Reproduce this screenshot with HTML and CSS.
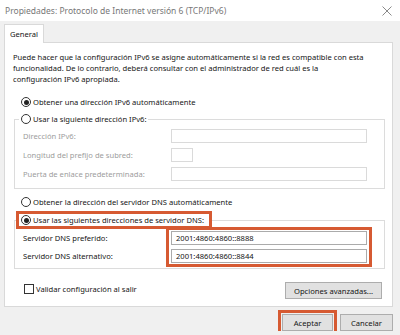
FILE: index.html
```html
<!DOCTYPE html>
<html>
<head>
  <meta charset="utf-8">
  <title>Propiedades: Protocolo de Internet versión 6 (TCP/IPv6)</title>
  <link rel="stylesheet" href="styles.css">
</head>
<body>
  <div class="titlebar">
    <span class="title">Propiedades: Protocolo de Internet versión 6 (TCP/IPv6)</span>
    <svg class="close" width="10" height="10" viewBox="0 0 10 10">
      <path d="M0.5 0.5 L9.5 9.5 M9.5 0.5 L0.5 9.5" stroke="#8a8a8a" stroke-width="1" fill="none"/>
    </svg>
  </div>
  <div class="content">
    <div class="tabs"><div class="tab">General</div></div>
    <div class="panel">
      <p class="intro">Puede hacer que la configuración IPv6 se asigne automáticamente si la red es compatible con esta<br>funcionalidad. De lo contrario, deberá consultar con el administrador de red cuál es la<br>configuración IPv6 apropiada.</p>

      <div class="option top-option"><span class="radio checked"></span>Obtener una dirección IPv6 automáticamente</div>

      <fieldset class="group ip-group">
        <legend><div class="option"><span class="radio"></span>Usar la siguiente dirección IPv6:</div></legend>
        <div class="fields">
          <span class="label disabled">Dirección IPv6:</span><span class="input off"></span>
          <span class="label disabled">Longitud del prefijo de subred:</span><span class="input off short"></span>
          <span class="label disabled">Puerta de enlace predeterminada:</span><span class="input off"></span>
        </div>
      </fieldset>

      <div class="option top-option dns-auto"><span class="radio"></span>Obtener la dirección del servidor DNS automáticamente</div>

      <fieldset class="group dns-group">
        <legend class="marked"><div class="option"><span class="radio checked"></span>Usar las siguientes direcciones de servidor DNS:</div></legend>
        <div class="dns-fields">
          <div class="dns-labels">
            <span class="label">Servidor DNS preferido:</span>
            <span class="label">Servidor DNS alternativo:</span>
          </div>
          <div class="dns-values">
            <span class="input">2001:4860:4860::8888</span>
            <span class="input">2001:4860:4860::8844</span>
          </div>
        </div>
      </fieldset>

      <div class="panel-footer">
        <div class="option check-option"><span class="checkbox"></span>Validar configuración al salir</div>
        <button class="btn advanced">Opciones avanzadas...</button>
      </div>
    </div>
    <div class="actions">
      <button class="btn accept">Aceptar</button>
      <button class="btn cancel">Cancelar</button>
    </div>
  </div>
</body>
</html>
```

FILE: styles.css
```css
* {
  box-sizing: border-box;
}
body {
  margin: 0;
  background: #f0f0f0;
  font-family: "Noto Sans", "Liberation Sans", sans-serif;
  font-size: 7.6px;
  color: #151515;
  overflow: hidden;
}
.titlebar {
  height: 21px;
  background: #fff;
  display: flex;
  align-items: center;
  justify-content: space-between;
  padding: 0 8px 0 5px;
}
.title {
  font-size: 8.5px;
  color: #777;
}
.content {
  padding: 3px 7px 0 4px;
}
.tabs {
  display: flex;
  margin-bottom: -1px;
}
.tab {
  height: 19px;
  line-height: 18px;
  padding: 0 5px;
  background: #fff;
  border: 1px solid #d9d9d9;
  border-bottom: none;
  position: relative;
  z-index: 1;
}
.panel {
  height: 265px;
  background: #fff;
  border: 1px solid #d9d9d9;
  padding: 9px 7px 0 8px;
}
.intro {
  margin: 0;
  line-height: 11px;
  white-space: nowrap;
}
.option {
  display: flex;
  align-items: center;
  gap: 2px;
  height: 12px;
  white-space: nowrap;
}
.top-option {
  margin: 11px 0 0 8px;
}
.dns-auto {
  margin-top: 7px;
}
.radio {
  width: 10px;
  height: 10px;
  border: 1px solid #333;
  border-radius: 50%;
  display: flex;
  align-items: center;
  justify-content: center;
  flex: none;
}
.radio.checked::after {
  content: "";
  width: 5px;
  height: 5px;
  border-radius: 50%;
  background: #222;
}
.checkbox {
  width: 10px;
  height: 10px;
  border: 1px solid #333;
  flex: none;
}
.group {
  margin: 5px 0 0 1px;
  width: 371px;
  border: 1px solid #dcdcdc;
  padding: 4px 17px 7px 8px;
  min-width: 0;
}
.group legend {
  padding: 0 2px;
  margin-left: -4px;
}
.dns-group {
  margin-top: 6px;
  padding-top: 1px;
  padding-bottom: 1px;
  padding-right: 12px;
}
.group legend.marked {
  padding: 0 5px 0 2px;
  outline: 3px solid #d65a32;
}
.fields {
  display: grid;
  grid-template-columns: 148px 196px;
  row-gap: 5px;
  align-items: center;
}
.label {
  height: 14px;
  line-height: 14px;
}
.disabled {
  color: #9d9d9d;
}
.input {
  height: 14px;
  line-height: 12px;
  border: 1px solid #ababab;
  background: #fff;
  padding: 0 4px;
  display: block;
}
.input.off {
  border-color: #dadada;
}
.input.short {
  width: 22px;
}
.dns-fields {
  display: flex;
}
.dns-labels {
  width: 143px;
  padding-top: 4px;
  display: flex;
  flex-direction: column;
  gap: 4px;
}
.dns-values {
  width: 206px;
  border: 3px solid #d65a32;
  padding: 1px 2px;
  display: flex;
  flex-direction: column;
  gap: 4px;
}
.panel-footer {
  margin-top: 13px;
  display: flex;
  justify-content: space-between;
  align-items: flex-start;
}
.check-option {
  margin: 1px 0 0 11px;
}
.btn {
  font-family: inherit;
  font-size: 7.6px;
  color: #151515;
  background: #e1e1e1;
  border: 1px solid #adadad;
  height: 17px;
  padding: 0;
  border-radius: 0;
}
.advanced {
  width: 97px;
  margin-right: 3px;
}
.actions {
  display: flex;
  justify-content: flex-end;
  gap: 7px;
  margin-top: 7px;
}
.accept {
  width: 51px;
  outline: 3px solid #d65a32;
  outline-offset: 1px;
}
.cancel {
  width: 53px;
}
```
